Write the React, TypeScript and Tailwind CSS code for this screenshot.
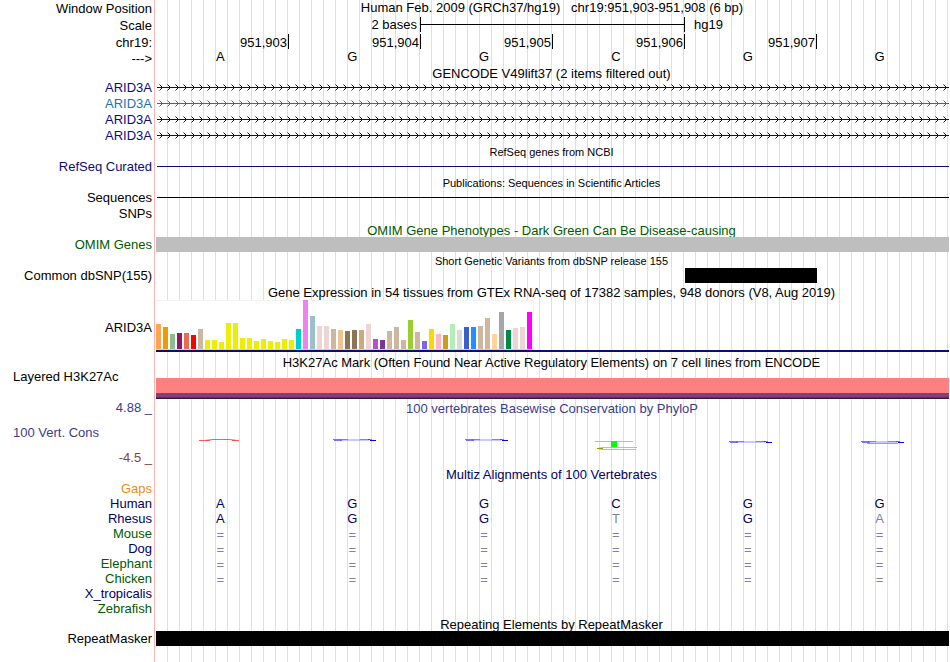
import type { ReactNode } from "react";

const NAVY = "text-[#0c0c78]";
const ALIGN_NAVY = "text-[#000064]";
const GREEN = "text-[#005a00]";

type RowProps = {
  label?: ReactNode;
  color?: string;
  className?: string;
  labelClass?: string;
  children?: ReactNode;
};

function Row({ label, color = "text-black", className = "", labelClass = "", children }: RowProps) {
  return (
    <div className={`flex ${className}`}>
      <div className={`w-[156px] shrink-0 pr-1 text-right whitespace-nowrap ${color} ${labelClass}`}>{label}</div>
      <div className="min-w-0 flex-1">{children}</div>
    </div>
  );
}

function Title({ children, color = "text-black", className = "" }: { children: ReactNode; color?: string; className?: string }) {
  return (
    <Row className={className}>
      <h2 className={`pr-0.5 text-center whitespace-nowrap ${color}`}>{children}</h2>
    </Row>
  );
}

function Bases({ bases, color = "text-black" }: { bases: string; color?: string }) {
  return (
    <div className={`grid grid-cols-6 pr-0.5 text-center ${color}`}>
      {bases.split("").map((b, i) => (
        <span key={i} className="pr-[3px]">
          {b}
        </span>
      ))}
    </div>
  );
}

function Transcript({ id, color }: { id: string; color: string }) {
  return (
    <Row label="ARID3A" color={color} className="h-4">
      <svg className={`block h-4 w-full ${color}`} aria-hidden="true">
        <defs>
          <pattern id={id} width="8" height="16" patternUnits="userSpaceOnUse">
            <path d="M3.5 4.5L6.5 7.5L3.5 10.5" fill="none" stroke="currentColor" strokeWidth="1" />
          </pattern>
        </defs>
        <rect width="100%" height="16" fill={`url(#${id})`} />
        <rect x="1" y="7" width="100%" height="1" fill="currentColor" />
      </svg>
    </Row>
  );
}

const tissues: [number, string][] = [
  [25, "#ffa54f"], [22, "#ee9a00"], [15, "#8fbc8f"], [16, "#8b1c62"], [16, "#ee6a50"], [14, "#ff0000"],
  [20, "#cdb79e"], [9, "#eeee00"], [9, "#eeee00"], [7, "#eeee00"], [26, "#eeee00"], [26, "#eeee00"],
  [11, "#eeee00"], [11, "#eeee00"], [8, "#eeee00"], [10, "#eeee00"], [8, "#eeee00"], [7, "#eeee00"],
  [10, "#eeee00"], [9, "#eeee00"], [20, "#00cdcd"], [49, "#ee82ee"], [33, "#9ac0cd"], [23, "#eed5d2"],
  [23, "#eed5d2"], [20, "#cdb79e"], [19, "#eec591"], [18, "#8b7355"], [19, "#8b7355"], [19, "#cdaa7d"],
  [25, "#eed5d2"], [10, "#b452cd"], [9, "#7a378b"], [18, "#cdb79e"], [22, "#cdb79e"], [9, "#cdb79e"],
  [29, "#9acd32"], [17, "#cdb79e"], [8, "#7a67ee"], [20, "#ffd700"], [15, "#ffb6c1"], [14, "#cd9b1d"],
  [25, "#b4eeb4"], [19, "#d9d9d9"], [22, "#3a5fcd"], [22, "#1e90ff"], [23, "#cdb79e"], [31, "#cdb79e"],
  [15, "#ffd39b"], [37, "#a6a6a6"], [19, "#008b45"], [21, "#eed5d2"], [22, "#eed5d2"], [37, "#ff00ff"],
];

function BlueGlyph({ low = false, red = false }: { low?: boolean; red?: boolean }) {
  return (
    <svg width="132" height="14" viewBox="0 0 132 14" aria-hidden="true">
      <g transform={low ? "translate(0 2)" : undefined}>
        <path d="M52 2H81V4H52Z" fill="#6464ff" fillOpacity="0.35" />
        <path d="M45 2.5H53M46 3.5H54" stroke="#3c3cff" strokeOpacity="0.7" />
        <path d="M52 2.5H60M72 2.5H82" stroke="#5050ff" strokeOpacity="0.6" />
        <path d="M80 2.5H84" stroke="#0000ff" strokeOpacity="0.5" />
        <path d="M82 3.5H88" stroke="#0000ff" />
        {red && <path d="M51 4.5H82" stroke="#ff5a5a" strokeOpacity="0.8" />}
      </g>
    </svg>
  );
}

function RedGlyph() {
  return (
    <svg width="132" height="14" viewBox="0 0 132 14" aria-hidden="true">
      <path d="M43 3.5H54M76 3.5H83" stroke="#ff3c3c" strokeOpacity="0.85" />
      <path d="M50 3.3L57 2.5H73L80 3.3" fill="none" stroke="#ff3c3c" strokeOpacity="0.85" />
    </svg>
  );
}

function GreenGlyph() {
  return (
    <svg width="132" height="14" viewBox="0 0 132 14" aria-hidden="true">
      <path d="M43 4.5H81" stroke="#5aff5a" />
      <rect x="59" y="4" width="6" height="6" fill="#00ff00" />
      <path d="M46 11.5L50 10.5H85M46 11.5L50 12.5H84" fill="none" stroke="#b4aa32" strokeOpacity="0.7" />
      <path d="M45 11.5H51" stroke="#a09600" />
    </svg>
  );
}

const species: { name: string; color: string; bases: string }[] = [
  { name: "Mouse", color: GREEN, bases: "======" },
  { name: "Dog", color: ALIGN_NAVY, bases: "======" },
  { name: "Elephant", color: GREEN, bases: "======" },
  { name: "Chicken", color: GREEN, bases: "======" },
  { name: "X_tropicalis", color: ALIGN_NAVY, bases: "" },
  { name: "Zebrafish", color: GREEN, bases: "" },
];

export default function App() {
  return (
    <main className="relative min-w-[700px] overflow-hidden bg-white pb-4 font-['Liberation_Sans',Arial,sans-serif] text-[13px] leading-[15px] text-black">
      <div className="absolute inset-y-0 left-[154px] w-px bg-[#ffb4b4]" />
      <div className="absolute inset-y-0 right-0 left-[156px] bg-[repeating-linear-gradient(to_right,transparent_0_11px,#dcdcff_11px_12px)]" />

      <div className="relative pr-px">
        <Row label="Window Position" className="h-[17px]" labelClass="pt-px">
          <h1 className="pr-px text-center whitespace-pre">Human Feb. 2009 (GRCh37/hg19)   chr19:951,903-951,908 (6 bp)</h1>
        </Row>
        <Row label="Scale" className="h-[17px]" labelClass="pt-px">
          <div className="grid grid-cols-6 pl-px">
            <span className="col-span-2 border-r border-black pr-[3px] text-right">2 bases</span>
            <span className="col-span-2 flex items-center border-r border-black">
              <span className="h-px w-full bg-black" />
            </span>
            <span className="col-span-2 pl-[9px]">hg19</span>
          </div>
        </Row>
        <Row label="chr19:" className="h-[15px]" labelClass="pt-px">
          <div className="grid grid-cols-6 pl-px text-right">
            {["951,903", "951,904", "951,905", "951,906", "951,907"].map((n) => (
              <span key={n} className="h-[15px] border-r border-black pt-px pr-px">
                {n}
              </span>
            ))}
          </div>
        </Row>
        <Row label="--->" className="h-[17px]" labelClass="pt-0.5">
          <Bases bases="AGGCGG" />
        </Row>

        <Title className="h-[14px]">GENCODE V49lift37 (2 items filtered out)</Title>
        <Transcript id="tx1" color={NAVY} />
        <Transcript id="tx2" color="text-[#1874b4]" />
        <Transcript id="tx3" color={NAVY} />
        <Transcript id="tx4" color={NAVY} />

        <Title className="h-[15px] pt-px text-[11px]">RefSeq genes from NCBI</Title>
        <Row label="RefSeq Curated" color={NAVY} className="h-4">
          <div className="pt-[7px] pl-px">
            <div className="h-px bg-[#0c0c78]" />
          </div>
        </Row>

        <Title className="h-[15px] pt-px text-[11px]">Publications: Sequences in Scientific Articles</Title>
        <Row label="Sequences" className="h-4">
          <div className="pt-[7px] pl-px">
            <div className="h-px bg-black" />
          </div>
        </Row>
        <Row label="SNPs" className="h-[17px]" />

        <Title color={GREEN} className="h-[14px]">OMIM Gene Phenotypes - Dark Green Can Be Disease-causing</Title>
        <Row label="OMIM Genes" color={GREEN}>
          <div className="h-[15px] bg-[#bebebe]" />
        </Row>

        <Title className="h-4 pt-0.5 text-[11px]">Short Genetic Variants from dbSNP release 155</Title>
        <Row label="Common dbSNP(155)">
          <div className="grid grid-cols-6 pl-px">
            <div className="col-start-5 h-[15px] bg-black" />
          </div>
        </Row>

        <Title className="h-[17px] pt-0.5">
          Gene Expression in 54 tissues from GTEx RNA-seq of 17382 samples, 948 donors (V8, Aug 2019)
        </Title>
        <Row label="ARID3A" className="h-[52px]" labelClass="pt-5">
          <div className="border-b-2 border-[#0c0c78]">
            <div className="flex h-[50px] w-[378px] items-end gap-0.5 border-t border-r border-b border-t-[#f2f2f2] border-r-[#f2f2f2] border-b-[#d2d2d2] bg-white">
              {tissues.map(([height, color], i) => (
                <div key={i} className="w-[5px] shrink-0" style={{ height, backgroundColor: color }} />
              ))}
            </div>
          </div>
        </Row>

        <Title className="h-[17px] pt-[3px]">
          H3K27Ac Mark (Often Found Near Active Regulatory Elements) on 7 cell lines from ENCODE
        </Title>
        <Row label={<span className="block pl-[13px] text-left">Layered H3K27Ac</span>} className="h-[30px]">
          <div className="pt-[9px]">
            <div className="h-[15px] bg-[#ff8080]" />
            <div className="h-1 bg-[#804080]" />
            <div className="h-px bg-[#702860]" />
            <div className="h-px bg-[#3c1830]" />
          </div>
        </Row>

        <Row
          className="h-[67px] pt-px"
          label={
            <div className="flex flex-col gap-2.5">
              <span className="text-[#3c3c8c]">4.88 _</span>
              <span className="pl-[13px] text-left text-[#3c3c8c]">100 Vert. Cons</span>
              <span className="text-[#8c3c3c]">-4.5 _</span>
            </div>
          }
        >
          <h2 className="pt-px pr-px text-center whitespace-nowrap text-[#3c3c8c]">
            100 vertebrates Basewise Conservation by PhyloP
          </h2>
          <div className="grid grid-cols-6 justify-items-center pt-[21px] pr-px">
            <RedGlyph />
            <BlueGlyph />
            <BlueGlyph />
            <GreenGlyph />
            <BlueGlyph low />
            <BlueGlyph low red />
          </div>
        </Row>

        <Title color={ALIGN_NAVY} className="h-[15px] pt-px">Multiz Alignments of 100 Vertebrates</Title>
        <Row label="Gaps" color="text-[#f08c14]" className="h-[15px]" />
        <Row label="Human" color={ALIGN_NAVY} className="h-[15px]">
          <Bases bases="AGGCGG" color={ALIGN_NAVY} />
        </Row>
        <Row label="Rhesus" color={ALIGN_NAVY} className="h-[15px]">
          <div className="grid grid-cols-6 pr-0.5 text-center text-[#000064]">
            <span className="pr-[3px]">A</span>
            <span className="pr-[3px]">G</span>
            <span className="pr-[3px]">G</span>
            <span className="pr-[3px] text-[#8080ae]">T</span>
            <span className="pr-[3px]">G</span>
            <span className="pr-[3px] text-[#8080ae]">A</span>
          </div>
        </Row>
        {species.map((s) => (
          <Row key={s.name} label={s.name} color={s.color} className="h-[15px]">
            <div className="pt-px">
              <Bases bases={s.bases} color="text-[#8080ae]" />
            </div>
          </Row>
        ))}

        <Title className="h-[15px] pt-px">Repeating Elements by RepeatMasker</Title>
        <Row label="RepeatMasker">
          <div className="h-[15px] bg-black" />
        </Row>
      </div>
    </main>
  );
}
